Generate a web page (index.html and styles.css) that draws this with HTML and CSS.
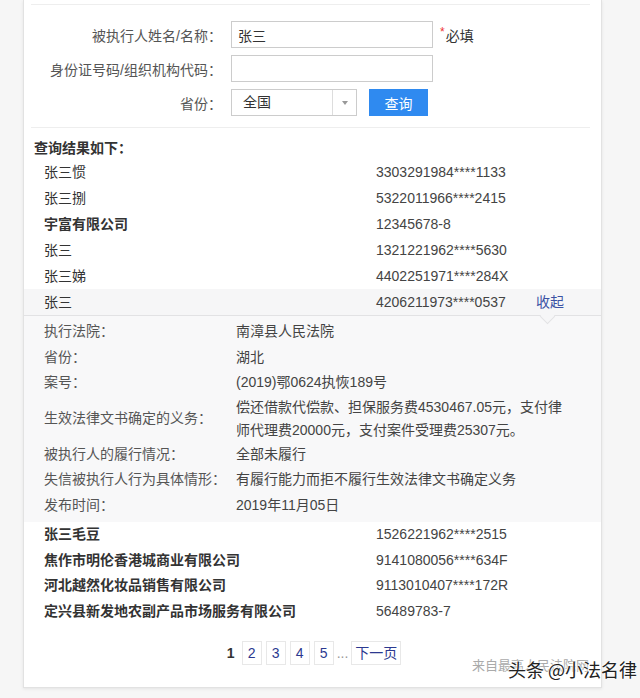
FILE: index.html
```html
<!doctype html>
<html lang="zh-CN">
<head>
  <meta charset="UTF-8">
  <meta name="viewport" content="width=device-width, initial-scale=1.0">
  <title>失信被执行人查询</title>
  <link rel="stylesheet" href="styles.css">
</head>
<body>
  <div class="page">
    <div class="card">
      <form class="search">
        <div class="field">
          <label>被执行人姓名/名称：</label>
          <input class="text" type="text" value="张三">
          <span class="required"><i>*</i>必填</span>
        </div>
        <div class="field">
          <label>身份证号码/组织机构代码：</label>
          <input class="text" type="text" value="">
        </div>
        <div class="field">
          <label>省份：</label>
          <div class="select">
            <span class="select-value">全国</span>
            <span class="select-arrow"></span>
          </div>
          <button type="button" class="btn">查询</button>
        </div>
      </form>

      <div class="results">
        <h3>查询结果如下：</h3>
        <ul class="list">
          <li class="row"><span class="name">张三惯</span><span class="code">3303291984****1133</span></li>
          <li class="row"><span class="name">张三捌</span><span class="code">5322011966****2415</span></li>
          <li class="row"><span class="name bold">宇富有限公司</span><span class="code">12345678-8</span></li>
          <li class="row"><span class="name">张三</span><span class="code">1321221962****5630</span></li>
          <li class="row"><span class="name">张三娣</span><span class="code">4402251971****284X</span></li>
          <li class="row open"><span class="name">张三</span><span class="code">4206211973****0537</span><a class="toggle" href="#">收起</a></li>
          <li class="detail">
            <dl>
              <div class="item"><dt>执行法院：</dt><dd>南漳县人民法院</dd></div>
              <div class="item"><dt>省份：</dt><dd>湖北</dd></div>
              <div class="item"><dt>案号：</dt><dd>(2019)鄂0624执恢189号</dd></div>
              <div class="item"><dt>生效法律文书确定的义务：</dt><dd class="multi">偿还借款代偿款、担保服务费4530467.05元，支付律师代理费20000元，支付案件受理费25307元。</dd></div>
              <div class="item"><dt>被执行人的履行情况：</dt><dd>全部未履行</dd></div>
              <div class="item"><dt>失信被执行人行为具体情形：</dt><dd>有履行能力而拒不履行生效法律文书确定义务</dd></div>
              <div class="item"><dt>发布时间：</dt><dd>2019年11月05日</dd></div>
            </dl>
          </li>
          <li class="row"><span class="name bold">张三毛豆</span><span class="code">1526221962****2515</span></li>
          <li class="row"><span class="name bold">焦作市明伦香港城商业有限公司</span><span class="code">9141080056****634F</span></li>
          <li class="row"><span class="name bold">河北越然化妆品销售有限公司</span><span class="code">9113010407****172R</span></li>
          <li class="row"><span class="name bold">定兴县新发地农副产品市场服务有限公司</span><span class="code">56489783-7</span></li>
        </ul>
      </div>

      <div class="pager">
        <span class="current">1</span>
        <a href="#">2</a>
        <a href="#">3</a>
        <a href="#">4</a>
        <a href="#">5</a>
        <span class="dots">...</span>
        <a href="#" class="next">下一页</a>
      </div>
      <div class="source">来自最高人民法院网</div>
    </div>
    <div class="watermark">头条 @小法名律</div>
  </div>
</body>
</html>
```

FILE: styles.css
```css
* {
  box-sizing: border-box;
}
body {
  margin: 0;
  background: #f6f6f6;
  font-family: "Liberation Sans", "Noto Sans CJK SC", sans-serif;
  font-size: 14px;
  color: #333;
}
.page {
  position: relative;
  height: 698px;
  overflow: hidden;
  padding-left: 23px;
}
.card {
  width: 579px;
  background: #fff;
  border: 1px solid #e2e2e2;
  border-top: 0;
  box-shadow: 0 1px 3px rgba(0,0,0,0.08);
  padding: 4px 0 12px;
}

/* search form */
.search {
  margin: 0 11px 0 7px;
  padding: 16px 0 11px;
  border-top: 1px solid #eee;
  border-bottom: 1px solid #eee;
  display: flex;
  flex-direction: column;
  gap: 7px;
}
.field {
  display: flex;
  align-items: center;
}
.field label {
  width: 191px;
  margin-right: 9px;
  text-align: right;
  color: #555;
}
.text {
  width: 202px;
  height: 27px;
  border: 1px solid #ccc;
  padding: 0 6px;
  font: inherit;
  color: #333;
}
.required {
  margin-left: 7px;
  color: #333;
}
.required i {
  font-style: normal;
  color: #e33;
  font-size: 12px;
  vertical-align: top;
  margin-right: 1px;
}
.select {
  width: 126px;
  height: 27px;
  border: 1px solid #ccc;
  display: flex;
}
.select-value {
  flex: 1;
  padding-left: 11px;
  line-height: 25px;
}
.select-arrow {
  width: 24px;
  border-left: 1px solid #ddd;
  display: flex;
  align-items: center;
  justify-content: center;
}
.select-arrow::after {
  content: '';
  border-top: 4px solid #999;
  border-left: 3px solid transparent;
  border-right: 3px solid transparent;
}
.btn {
  margin-left: 12px;
  width: 59px;
  height: 27px;
  border: none;
  background: #2f8af0;
  color: #fff;
  font: inherit;
  cursor: pointer;
}

/* results */
.results h3 {
  margin: 9px 0 0 10px;
  font-size: 14px;
  line-height: 22px;
}
.list {
  list-style: none;
  margin: 0;
  padding: 0;
}
.row {
  display: grid;
  grid-template-columns: 332px 160px auto;
  padding-left: 20px;
  line-height: 26px;
}
.row .name {
  color: #333;
}
.row .bold {
  font-weight: bold;
}
.row .code {
  color: #444;
}
.toggle {
  color: #3b52a4;
  text-decoration: none;
}
.row.open {
  position: relative;
  background: #f6f6f7;
  border-bottom: 1px solid #e2e2e4;
}
.row.open::after {
  content: '';
  position: absolute;
  left: 518px;
  bottom: -7px;
  width: 10px;
  height: 10px;
  background: #f6f6f7;
  border-right: 1px solid #e2e2e4;
  border-bottom: 1px solid #e2e2e4;
  transform: rotate(45deg);
}
.detail {
  background: #f8f8f9;
  padding: 3px 0 4px;
}
.detail dl {
  margin: 0;
}
.item {
  display: grid;
  grid-template-columns: 192px 330px;
  align-items: center;
  padding-left: 20px;
  line-height: 25.5px;
}
.item dt {
  color: #555;
}
.item dd {
  margin: 0;
  color: #444;
}
.item dd.multi {
  line-height: 23px;
}
.detail ~ .row {
  line-height: 25.5px;
}

/* pager */
.pager {
  margin-top: 17px;
  display: flex;
  justify-content: center;
  align-items: center;
  gap: 4px;
}
.pager a,
.pager span {
  height: 24px;
  line-height: 22px;
  min-width: 20px;
  text-align: center;
  border: 1px solid #e8e8e8;
  color: #2b3990;
  text-decoration: none;
}
.pager .current {
  border-color: transparent;
  color: #333;
  font-weight: bold;
  min-width: 14px;
}
.pager .dots {
  border-color: transparent;
  color: #999;
  min-width: 12px;
  margin: 0 -2px;
}
.pager .next {
  padding: 0 3px;
}
.source {
  margin-top: -8px;
  padding-right: 12px;
  text-align: right;
  font-size: 13px;
  color: #aaa;
  line-height: 18px;
}
.watermark {
  position: absolute;
  left: 508px;
  top: 656px;
  font-size: 18px;
  color: #222;
  white-space: nowrap;
  text-shadow: 0 0 2px #fff, 0 0 2px #fff, 0 0 3px #fff;
  font-family: "Noto Sans CJK SC", sans-serif;
}
```
